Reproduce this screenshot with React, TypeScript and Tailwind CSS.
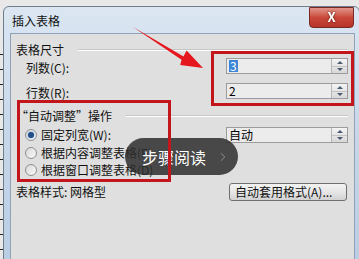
import { ChevronRight } from 'lucide-react';

const font = { fontFamily: '"Noto Sans CJK SC", "Noto Sans", sans-serif' };

const SpinButtons = () => (
  <div className="flex flex-col w-[16px] h-full border-l border-[#b5b5b5] bg-gradient-to-b from-[#f4f4f4] to-[#d8d8d8]">
    <div className="flex-1 flex items-center justify-center border-b border-[#c4c4c4]">
      <div className="w-0 h-0 border-l-[3px] border-r-[3px] border-b-[3px] border-l-transparent border-r-transparent border-b-[#4a5a70]" />
    </div>
    <div className="flex-1 flex items-center justify-center">
      <div className="w-0 h-0 border-l-[3px] border-r-[3px] border-t-[3px] border-l-transparent border-r-transparent border-t-[#4a5a70]" />
    </div>
  </div>
);

const SpinBox = ({ children }: { children: React.ReactNode }) => (
  <div className="w-[122px] h-[16px] flex border border-[#9c9c9c] bg-[#ececec]">
    <div className="flex-1 flex items-center pl-[2px] text-[12px] leading-none text-black">{children}</div>
    <SpinButtons />
  </div>
);

const Radio = ({ checked }: { checked?: boolean }) => (
  <div className="w-[12px] h-[12px] rounded-full border border-[#8f8f8f] bg-gradient-to-br from-[#d8d8d8] to-[#fafafa] flex items-center justify-center">
    {checked && <div className="w-[6px] h-[6px] rounded-full bg-[#1f4f86] shadow-[0_0_2px_#6aa0e0]" />}
  </div>
);

const Header = ({ text }: { text: string }) => (
  <div className="h-[16px] flex items-center">
    <span className="text-[12px] leading-none">{text}</span>
    <div className="flex-1 ml-[14px] h-[2px] border-t border-[#c6c6c6] border-b border-b-white" />
  </div>
);

export default function App() {
  return (
    <div className="relative w-[359px] h-[259px] overflow-hidden bg-[#e8e8e8] pt-[6px] pl-[3px]" style={font}>
      {/* background doc marks */}
      <div className="absolute left-0 top-[40px] w-[3px] h-[220px] bg-[repeating-linear-gradient(to_bottom,#e8e8e8_0px,#e8e8e8_14px,#222_14px,#222_15px)]" />

      <div className="w-[357px] h-[260px] rounded-t-[6px] border border-[#6f7c8c] bg-gradient-to-b from-[#dbe6f2] via-[#c7d7e9] to-[#b9cde3] flex flex-col pl-[6px] pr-[4px]">
        <div className="h-[26px] flex items-center justify-between text-[12px] text-[#111]">
          <span className="pl-[2px] pt-[1px]">插入表格</span>
          <div className="mr-[1px] -mt-[6px] w-[45px] h-[21px] rounded-b-[4px] border border-[#7a2a24] bg-gradient-to-b from-[#e2948a] via-[#c9483a] to-[#b8342a] flex items-center justify-center text-white text-[13px] font-bold">
            <span className="drop-shadow-[0_0_1px_#5a1410]">X</span>
          </div>
        </div>

        <div className="flex-1 border border-[#8fa2b8] bg-[#dfdfdf] pl-[5px] pr-[6px] text-[#111]">
          <div className="mt-[8px]">
            <Header text="表格尺寸" />
          </div>
          <div className="h-[16px] flex justify-between">
            <span className="pl-[10px] pt-[4px] text-[12px] leading-none">列数(C):</span>
            <SpinBox>
              <span className="bg-[#3b86d6] text-white px-[1px]">3</span>
            </SpinBox>
          </div>
          <div className="mt-[9px] h-[16px] flex justify-between">
            <span className="pl-[10px] pt-[4px] text-[12px] leading-none">行数(R):</span>
            <SpinBox>2</SpinBox>
          </div>
          <div className="mt-[9px]">
            <Header text="“自动调整”操作" />
          </div>
          <div className="mt-[3px] h-[16px] flex justify-between items-center">
            <div className="flex items-center gap-[4px] pl-[9px] text-[12px] leading-none">
              <Radio checked />
              <span>固定列宽(W):</span>
            </div>
            <SpinBox>自动</SpinBox>
          </div>
          <div className="mt-[2px] h-[16px] flex items-center gap-[4px] pl-[9px] text-[12px] leading-none">
            <Radio />
            <span>根据内容调整表格(F)</span>
          </div>
          <div className="mt-[1px] h-[16px] flex items-center gap-[4px] pl-[9px] text-[12px] leading-none">
            <Radio />
            <span>根据窗口调整表格(D)</span>
          </div>
          <div className="mt-[5px] h-[18px] flex justify-between items-center">
            <span className="text-[12px] leading-none">表格样式: 网格型</span>
            <div className="mr-[1px] w-[118px] h-[18px] rounded-[3px] border border-[#707070] bg-gradient-to-b from-[#f2f2f2] via-[#e6e6e6] to-[#d2d2d2] flex items-center pl-[5px] text-[12px] leading-none">
              自动套用格式(A)...
            </div>
          </div>
        </div>
      </div>

      {/* step-reading pill */}
      <div className="absolute left-[125px] top-[138px] w-[113px] h-[37px] rounded-full bg-[#2e2e2e]/85 flex items-center pl-[17px] text-white">
        <span className="text-[16px] leading-none">步骤阅读</span>
        <ChevronRight className="ml-[10px] w-[14px] h-[14px] text-[#9a9a9a]" strokeWidth={1.5} />
      </div>

      {/* red annotations */}
      <div className="absolute left-[211px] top-[51px] w-[143px] h-[55px] border-[3px] border-[#c3161c]" />
      <div className="absolute left-[17px] top-[100px] w-[154px] h-[82px] border-[3px] border-[#c3161c]" />
      <svg className="absolute left-0 top-0" width="359" height="259" viewBox="0 0 359 259">
        <polygon points="133,27 183.5,56.5 186.6,50.6 203,68 180.2,64.9 181.6,59.8" fill="#e5161d" />
      </svg>
    </div>
  );
}
